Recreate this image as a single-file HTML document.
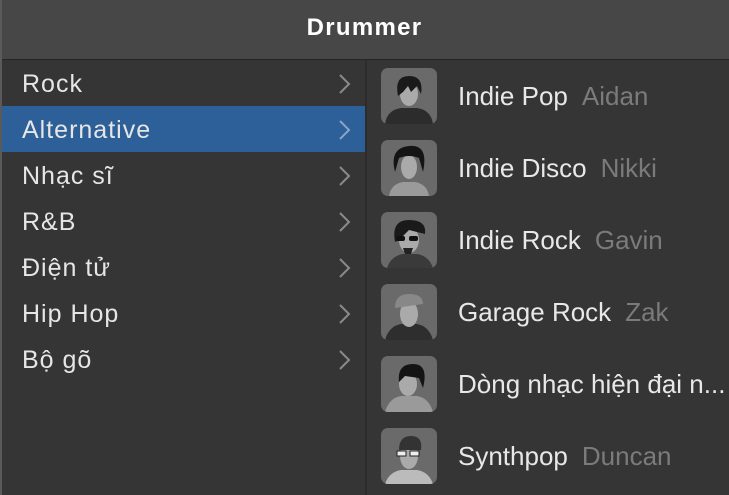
<html><head><style>
body{margin:0;width:729px;height:495px;overflow:hidden;background:#353535;font-family:"Liberation Sans",sans-serif;position:relative}
.hdr{position:absolute;left:0;top:0;width:729px;height:60px;background:#474747;border-bottom:1px solid #262626;box-sizing:border-box}
.hdr span{position:absolute;left:0;right:0;top:14px;text-align:center;color:#fff;font-weight:bold;font-size:24px;letter-spacing:1.3px}
.lb{position:absolute;left:0;top:0;width:2px;height:495px;background:#5a5a5a}
.sep{position:absolute;left:365px;top:60px;width:2px;height:435px;background:#2c2c2c}
.row{position:absolute;left:2px;width:363px;height:46px;color:#e6e6e6;font-size:25px;letter-spacing:1px}
.row span{position:absolute;left:20px;top:10px}
.row svg{position:absolute;left:334px;top:13px}
.sel{background:#2d5f98}
.av{position:absolute;left:381px;width:56px;height:56px;border-radius:7px;background:#6a6a6a;overflow:hidden}
.t{position:absolute;left:458px;color:#e8e8e8;font-size:26px;white-space:nowrap}
.t i{font-style:normal;color:#7b7b7b;margin-left:14px}
</style></head><body>
<div class="hdr"><span>Drummer</span></div>
<div class="lb"></div><div class="sep"></div>
<div class="row" style="top:60px"><span>Rock</span><svg width="16" height="22"><path d="M4 2l9 9-9 9" stroke="#8a8a8a" stroke-width="2" fill="none"/></svg></div>
<div class="row sel" style="top:106px"><span>Alternative</span><svg width="16" height="22"><path d="M4 2l9 9-9 9" stroke="#8aa4c6" stroke-width="2" fill="none"/></svg></div>
<div class="row" style="top:152px"><span>Nhạc sĩ</span><svg width="16" height="22"><path d="M4 2l9 9-9 9" stroke="#8a8a8a" stroke-width="2" fill="none"/></svg></div>
<div class="row" style="top:198px"><span>R&amp;B</span><svg width="16" height="22"><path d="M4 2l9 9-9 9" stroke="#8a8a8a" stroke-width="2" fill="none"/></svg></div>
<div class="row" style="top:244px"><span>Điện tử</span><svg width="16" height="22"><path d="M4 2l9 9-9 9" stroke="#8a8a8a" stroke-width="2" fill="none"/></svg></div>
<div class="row" style="top:290px"><span>Hip Hop</span><svg width="16" height="22"><path d="M4 2l9 9-9 9" stroke="#8a8a8a" stroke-width="2" fill="none"/></svg></div>
<div class="row" style="top:336px"><span>Bộ gõ</span><svg width="16" height="22"><path d="M4 2l9 9-9 9" stroke="#8a8a8a" stroke-width="2" fill="none"/></svg></div>

<div class="av" style="top:68px"><svg width="56" height="56"><path d="M4 56q2-14 16-16h16q14 2 16 16z" fill="#2c2c2c"/><ellipse cx="28" cy="26" rx="9" ry="12" fill="#aaa"/><path d="M17 28q-4-20 11-20t12 18l-4-8-6 6-3-6-5 6z" fill="#1a1a1a"/></svg></div>
<div class="t" style="top:81px">Indie Pop<i>Aidan</i></div>
<div class="av" style="top:140px"><svg width="56" height="56"><path d="M8 56q2-12 14-14h12q12 2 14 14z" fill="#9a9a9a"/><ellipse cx="28" cy="27" rx="8" ry="12" fill="#aaa"/><path d="M14 32q-6-24 14-26t14 26l-4-14q-10-4-20 0z" fill="#141414"/></svg></div>
<div class="t" style="top:153px">Indie Disco<i>Nikki</i></div>
<div class="av" style="top:212px"><svg width="56" height="56"><path d="M6 56q4-12 16-14h14q12 2 16 14z" fill="#3a3a3a"/><ellipse cx="28" cy="28" rx="10" ry="13" fill="#aaa"/><path d="M14 30q-4-22 14-22t16 14l-16-4-10 10z" fill="#1a1a1a"/><rect x="15" y="24" width="9" height="5" rx="2" fill="#111"/><rect x="28" y="24" width="9" height="5" rx="2" fill="#111"/><path d="M22 36h10l-2 6h-6z" fill="#222"/></svg></div>
<div class="t" style="top:225px">Indie Rock<i>Gavin</i></div>
<div class="av" style="top:284px"><svg width="56" height="56"><path d="M4 56q4-14 16-16h16q12 2 16 16z" fill="#2e2e2e"/><ellipse cx="28" cy="30" rx="9" ry="13" fill="#aaa"/><path d="M14 24q0-14 14-14t14 10z" fill="#888"/></svg></div>
<div class="t" style="top:297px">Garage Rock<i>Zak</i></div>
<div class="av" style="top:356px"><svg width="56" height="56"><path d="M4 56q4-14 16-16h16q12 2 16 16z" fill="#9a9a9a"/><ellipse cx="27" cy="28" rx="9" ry="12" fill="#aaa"/><path d="M18 26q-2-18 14-18t10 24l-4-10-14-2z" fill="#141414"/></svg></div>
<div class="t" style="top:369px">Dòng nhạc hiện đại n...</div>
<div class="av" style="top:428px"><svg width="56" height="56"><path d="M4 56q4-12 16-14h16q12 2 16 14z" fill="#bbb"/><ellipse cx="28" cy="28" rx="9" ry="13" fill="#aaa"/><path d="M18 22q0-14 12-14t10 14z" fill="#333"/><rect x="16" y="23" width="9" height="5" fill="#eee" stroke="#222"/><rect x="29" y="23" width="9" height="5" fill="#eee" stroke="#222"/></svg></div>
<div class="t" style="top:441px">Synthpop<i>Duncan</i></div>
</body></html>
